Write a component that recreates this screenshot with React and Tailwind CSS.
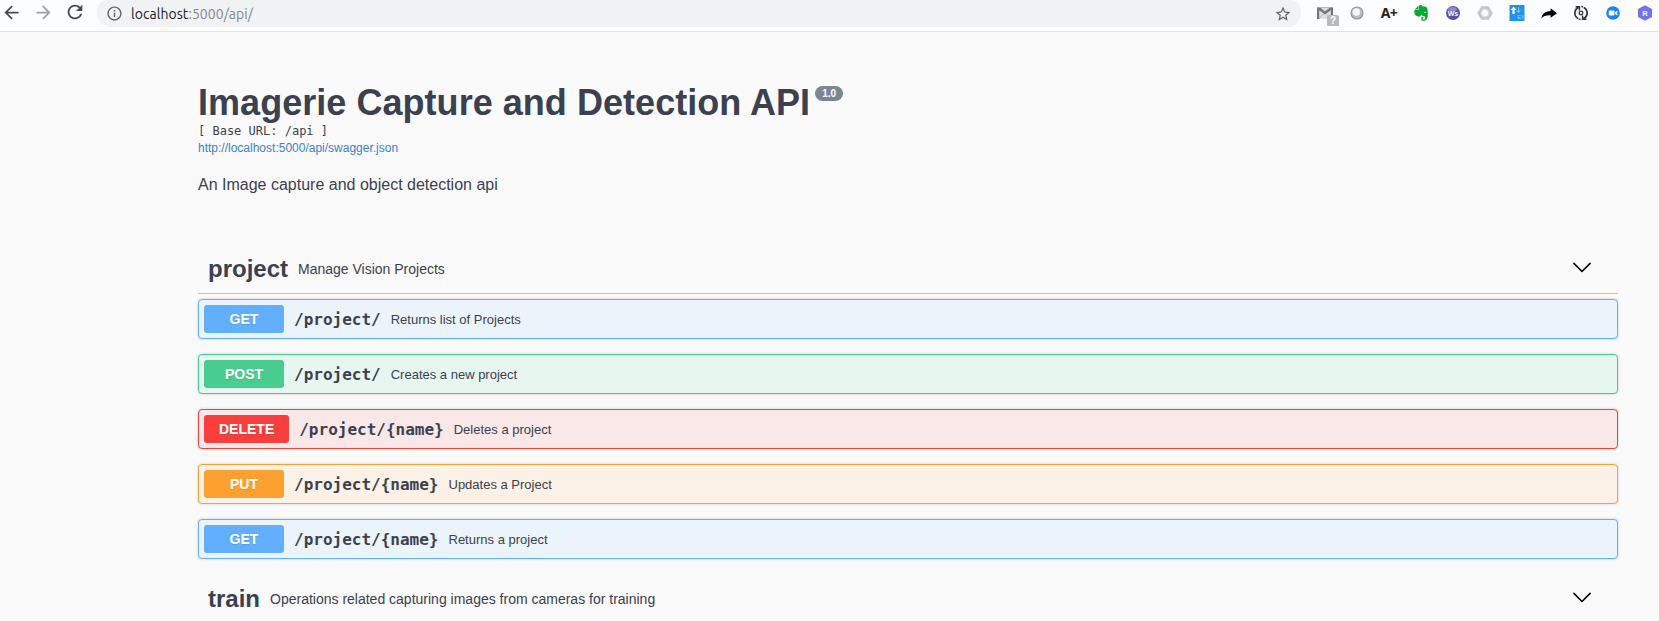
import React from "react";
import { SiEvernote } from "react-icons/si";
import { MdArrowBack, MdArrowForward, MdRefresh, MdInfoOutline, MdStarBorder } from "react-icons/md";

function Cell({ children }) {
  return <div className="relative flex h-[26px] w-8 shrink-0 items-center justify-center">{children}</div>;
}

function Extensions() {
  return (
    <div className="ml-2 flex w-[350px] shrink-0 overflow-hidden">
      <Cell>
        <svg width="16" height="12" viewBox="0 0 16 12">
          <rect width="16" height="12" fill="#dedede" />
          <path d="M0 0h2.4L8 4.6 13.6 0H16v12h-2.2V3.2L8 7.6 2.2 3.2V12H0z" fill="#777" />
          <path d="M0 .5h16M2.2 11.5 6 7.2M13.8 11.5 10 7.2" stroke="#b0b0b0" strokeWidth=".8" />
        </svg>
        <span className="absolute left-[18px] top-[15px] flex h-3 w-3 items-center justify-center rounded-[2px] bg-[#b9b9b9] font-['Liberation_Sans',sans-serif] text-[10px] font-bold leading-none text-white">?</span>
      </Cell>
      <Cell>
        <svg width="14" height="14" viewBox="0 0 14 14">
          <circle cx="7" cy="7" r="6.6" fill="#999" />
          <circle cx="7" cy="7" r="5.4" fill="#bcbcbc" />
          <circle cx="6.4" cy="6" r="3.8" fill="#f5f5f5" />
        </svg>
      </Cell>
      <Cell>
        <span className="font-['Noto_Sans',sans-serif] text-[14px] font-bold leading-none tracking-[-0.5px] text-[#222]">A+</span>
      </Cell>
      <Cell><SiEvernote size={16} color="#08a832" /></Cell>
      <Cell>
        <svg width="14" height="14" viewBox="0 0 14 14">
          <circle cx="7" cy="7" r="7" fill="#5551ad" />
          <ellipse cx="6.5" cy="3.2" rx="4.4" ry="2.2" fill="#8f8bd3" />
          <text x="7" y="9.6" textAnchor="middle" fontSize="7" fontWeight="bold" fill="#fff" fontFamily="Liberation Sans, sans-serif">Ws</text>
        </svg>
      </Cell>
      <Cell>
        <svg width="16" height="14" viewBox="0 0 16 14">
          <path d="M4.4.2h7.2L15.8 7l-4.2 6.8H4.4L.2 7z" fill="#c6c6c6" />
          <circle cx="8" cy="7" r="4.4" fill="#dedede" />
          <circle cx="8" cy="7" r="3.1" fill="#fafafa" />
        </svg>
      </Cell>
      <Cell>
        <svg width="16" height="16" viewBox="0 0 16 16">
          <rect width="15" height="16" x=".5" fill="#1f93f0" />
          <path d="M4.5 1.5 7.4 5H5.6v4H3.4V5H1.6z" fill="#fff" />
          <path d="M9.5 2.2v5M7.8 5.4l1.7 1.9 1.7-1.9" stroke="#8dcafa" fill="none" />
          <text x="8.4" y="14" fontSize="5" fill="#9ed2fb" fontFamily="Liberation Sans, sans-serif">EX</text>
        </svg>
      </Cell>
      <Cell>
        <svg width="16" height="11" viewBox="0 0 16 11">
          <path d="M9.6.3 16 5.2 9.6 9.8V7.2C5.2 7 2.6 8 .4 10.4 1 6 4.2 3.4 9.6 3.1z" fill="#000" />
        </svg>
      </Cell>
      <Cell>
        <svg width="16" height="16" viewBox="0 0 16 16" fill="none" stroke="#333" strokeWidth="1.7">
          <path d="M5.2 13.6A6.2 6.2 0 0 1 5.6 2.4M10.8 2.4A6.2 6.2 0 0 1 10.4 13.6" />
          <path d="M2.6 1.8h3.8v3.8M13.4 14.2H9.6v-3.8" strokeWidth="1.5" />
          <path d="M10.2 2.2 8.4 1.4M5.8 13.8l1.8.8" strokeWidth="1.4" />
          <circle cx="8" cy="8" r="1.8" strokeWidth="1.3" />
        </svg>
      </Cell>
      <Cell>
        <svg width="14" height="14" viewBox="0 0 14 14">
          <circle cx="7" cy="7" r="6.8" fill="#1c84f7" />
          <rect x="2.8" y="4.6" width="5.6" height="4.8" rx="1" fill="#fff" />
          <path d="m8.8 6.2 2.5-1.6v4.8L8.8 7.8z" fill="#fff" />
        </svg>
      </Cell>
      <Cell>
        <svg width="16" height="16" viewBox="0 0 16 16">
          <path d="M8 .2 15 4v8l-7 3.8L1 12V4z" fill="#7471ec" />
          <text x="8" y="10.7" textAnchor="middle" fontSize="7.5" fontWeight="bold" fill="#fff" fontFamily="Liberation Sans, sans-serif">R</text>
        </svg>
      </Cell>
    </div>
  );
}

function Toolbar() {
  return (
    <header className="flex h-8 items-start border-b border-[#dfe1e5] bg-[#fcfdff]">
      <div className="flex h-6 w-[97px] shrink-0 items-center text-[#454b51]">
        <MdArrowBack size={21} className="ml-px shrink-0" />
        <MdArrowForward size={21} className="ml-[11px] shrink-0 text-[#9ba2a6]" />
        <MdRefresh size={22} className="ml-[10px] shrink-0" />
      </div>
      <div className="flex h-[27px] w-[1204px] shrink-0 items-center rounded-b-[14px] rounded-t-[10px] bg-[#f1f2f4] px-[9px]">
        <MdInfoOutline size={17} className="shrink-0 text-[#5f6368]" />
        <span className="ml-2 font-['Ubuntu','Noto_Sans',sans-serif] text-[14px] leading-none tracking-[0.05px] text-[#83878c]">
          <span className="text-[#202124]">localhost</span>:5000/api/
        </span>
        <MdStarBorder size={18} className="ml-auto shrink-0 text-[#5f6368]" />
      </div>
      <Extensions />
    </header>
  );
}

function TagHeader({ name, description }) {
  return (
    <div className="flex h-[50px] items-center border-b border-[#c0c0c2] pl-[10px] pr-[26px]">
      <h2 className="text-[24px] font-bold leading-none">{name}</h2>
      <p className="flex-1 pl-[10px] text-[14px] leading-none">{description}</p>
      <svg width="20" height="20" viewBox="0 0 20 20">
        <path d="m1.9 4.4 8.1 8.1 8.1-8.1" fill="none" stroke="#000" strokeWidth="1.5" strokeLinecap="round" strokeLinejoin="round" />
      </svg>
    </div>
  );
}

const styles = {
  GET: { row: "border-[#61affe] bg-[#ebf3fb]", badge: "bg-[#61affe]" },
  POST: { row: "border-[#49cc90] bg-[#e8f6f0]", badge: "bg-[#49cc90]" },
  DELETE: { row: "border-[#f93e3e] bg-[#fae7e7]", badge: "bg-[#f93e3e]" },
  PUT: { row: "border-[#fca130] bg-[#fbf1e6]", badge: "bg-[#fca130]" },
};

const operations = [
  ["GET", "/project/", "Returns list of Projects"],
  ["POST", "/project/", "Creates a new project"],
  ["DELETE", "/project/{name}", "Deletes a project"],
  ["PUT", "/project/{name}", "Updates a Project"],
  ["GET", "/project/{name}", "Returns a project"],
];

function Operation({ method, path, summary }) {
  const s = styles[method];
  return (
    <div className={`flex h-10 items-center rounded-[4px] border px-[5px] shadow-[0_0_3px_rgba(0,0,0,0.19)] ${s.row}`}>
      <span className={`flex h-7 min-w-[80px] items-center justify-center rounded-[3px] px-[15px] text-[14px] font-bold text-white [text-shadow:0_1px_0_rgba(0,0,0,0.1)] ${s.badge}`}>{method}</span>
      <span className="px-[10px] pt-0.5 font-['DejaVu_Sans_Mono',monospace] text-[16px] font-bold leading-none">{path}</span>
      <span className="text-[13px] leading-none">{summary}</span>
    </div>
  );
}

export default function App() {
  return (
    <div className="h-[621px] overflow-hidden bg-[#fafafa] font-['Liberation_Sans',Arial,sans-serif] text-[#3b4151]">
      <Toolbar />
      <main className="ml-[198px] w-[1420px]">
        <section className="h-[212px] pt-[50px]">
          <div className="flex items-start">
            <h1 className="text-[36px] font-bold leading-[41px] tracking-[0.04px]">Imagerie Capture and Detection API</h1>
            <span className="ml-[5px] mt-1 flex h-[15px] w-7 items-center justify-center rounded-full bg-[#7d8492] text-[10px] font-bold leading-none text-white">1.0</span>
          </div>
          <pre className="pt-px font-['DejaVu_Sans_Mono',monospace] text-[12px] leading-[14px]">[ Base URL: /api ]</pre>
          <a className="mt-[3px] block text-[12px] leading-[14px] text-[#3f80d0]">http://localhost:5000/api/swagger.json</a>
          <p className="mt-5 text-[16px] leading-[20px]">An Image capture and object detection api</p>
        </section>
        <TagHeader name="project" description="Manage Vision Projects" />
        <div className="flex flex-col gap-[15px] pb-[15px] pt-[5px]">
          {operations.map(([m, p, s]) => (
            <Operation key={m + p} method={m} path={p} summary={s} />
          ))}
        </div>
        <TagHeader name="train" description="Operations related capturing images from cameras for training" />
      </main>
    </div>
  );
}
